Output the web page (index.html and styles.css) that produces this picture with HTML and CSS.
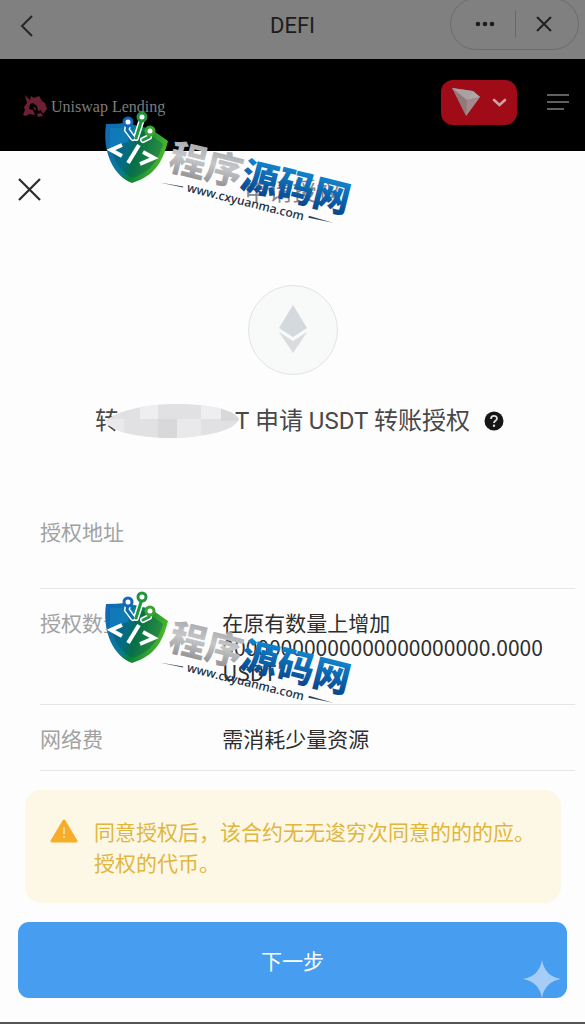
FILE: index.html
```
<!DOCTYPE html>
<html lang="zh-CN">
<head>
    <meta charset="UTF-8">
    <meta name="viewport" content="width=device-width, initial-scale=1.0">
    <title>DEFI</title>
    <link rel="stylesheet" href="styles.css">
</head>
<body>
    <div class="topbar">
        <button class="icon-btn back" aria-label="返回">
            <svg width="14" height="24" viewBox="0 0 14 24"><path d="M12 2 2 12l10 10" fill="none" stroke="#262626" stroke-width="2"/></svg>
        </button>
        <h1>DEFI</h1>
        <div class="capsule">
            <button class="icon-btn" aria-label="更多">
                <svg width="20" height="6" viewBox="0 0 20 6" fill="#1c1c1c"><circle cx="3" cy="3" r="2.3"/><circle cx="10" cy="3" r="2.3"/><circle cx="17" cy="3" r="2.3"/></svg>
            </button>
            <span class="split"></span>
            <button class="icon-btn" aria-label="关闭">
                <svg width="16" height="16" viewBox="0 0 16 16"><path d="M1 1l14 14M15 1L1 15" fill="none" stroke="#222" stroke-width="2"/></svg>
            </button>
        </div>
    </div>

    <div class="site-header">
        <a href="#" class="brand">
            <svg width="26" height="26" viewBox="0 0 26 26" fill="#6d2034">
                <path d="M3 2l5 5 1-4 3 2 5-2 3 5 3 2 2 6-4 5-2-4-3 1-1-5-4-3-3 1-1 5 4 1 2 5-6-1-3 2-3-1 2-5-1-3 3-4z"/>
                <path d="M15 21l4-1 2 3-5 1zM11 14l3 1-1 3z"/>
            </svg>
            <span>Uniswap Lending</span>
        </a>
        <button class="chain" aria-label="切换网络">
            <svg width="30" height="30" viewBox="0 0 30 30">
                <path d="M1 1l21 3 7 6-14 19z" fill="#92797c"/>
                <path d="M1 1l21 3-6 9z" fill="#aaa1a2"/>
                <path d="M22 4l7 6-13 3z" fill="#b3a8a9"/>
                <path d="M16 13l13-3-14 19z" fill="#a38b8d"/>
            </svg>
            <svg width="15" height="9" viewBox="0 0 15 9"><path d="M2 2l5.500 5L13 2" fill="none" stroke="#c9a3a6" stroke-width="2.600" stroke-linecap="round"/></svg>
        </button>
        <button class="icon-btn" aria-label="菜单">
            <svg width="22" height="18" viewBox="0 0 22 18"><path d="M0 2h22M0 9h22M0 16h17" stroke="#606060" stroke-width="2"/></svg>
        </button>
    </div>

    <main class="sheet">
        <div class="sheet-head">
            <button class="icon-btn" aria-label="关闭">
                <svg width="23" height="23" viewBox="0 0 23 23"><path d="M1 1l21 21M22 1L1 22" fill="none" stroke="#2b2b2b" stroke-width="2.200"/></svg>
            </button>
            <h2>申请授权</h2>
        </div>

        <div class="coin">
            <svg width="30" height="50" viewBox="0 0 30 50">
                <path d="M15 0l14 23-14 9L1 23z" fill="#d3d9dc"/>
                <path d="M1 27l14 9 14-9-14 21z" fill="#d9dbdc"/>
            </svg>
        </div>

        <p class="request">
            <span>转</span>
            <svg class="mask" width="134" height="36" viewBox="0 0 134 36">
                <defs><clipPath id="blob"><path d="M0 18C12 8 38 2 66 1c30-1 62 4 68 15-4 12-34 18-66 19C36 35 8 30 0 18z"/></clipPath></defs>
                <g clip-path="url(#blob)">
                    <path fill="#e1e1e3" d="M0 0h134v36H0z"/>
                    <path fill="#eeeef0" d="M35 0h18v16H35zM96 0h20v16H96z"/>
                    <path fill="#d8d8da" d="M53 16h19v20H53zM116 0h18v18h-18z"/>
                    <path fill="#e9e9eb" d="M0 16h19v20H0zM72 16h24v20H72z"/>
                </g>
            </svg>
            <span class="request-text">T 申请 USDT 转账授权</span>
            <svg class="help" width="20" height="20" viewBox="0 0 20 20">
                <circle cx="10" cy="10" r="9.500" fill="#161616"/>
                <path d="M7 8c0-4 6-4 6-.5 0 2.300-3 2.300-3 4.500" fill="none" stroke="#ddd" stroke-width="1.800"/>
                <circle cx="10" cy="14.800" r="1.200" fill="#ddd"/>
            </svg>
        </p>

        <dl class="details">
            <div class="row row-address">
                <dt>授权地址</dt>
                <dd></dd>
            </div>
            <div class="row">
                <dt>授权数量</dt>
                <dd>在原有数量上增加<br>00000000000000000000000.0000<br>USDT</dd>
            </div>
            <div class="row">
                <dt>网络费</dt>
                <dd>需消耗少量资源</dd>
            </div>
        </dl>

        <div class="warning">
            <svg width="28" height="24" viewBox="0 0 28 24">
                <path d="M14 2l12 20H2z" fill="#f6ad2b" stroke="#f6ad2b" stroke-width="3" stroke-linejoin="round"/>
                <path d="M14 8v7M14 17v2" stroke="#fbd48b" stroke-width="2"/>
            </svg>
            <p>同意授权后，该合约无无逡穷次同意的的的应。<br>授权的代币。</p>
        </div>

        <button class="next">
            下一步
            <svg class="spark" width="38" height="38" viewBox="0 0 38 38"><path d="M19 0c2 11 8 17 19 19-11 2-17 8-19 19-2-11-8-17-19-19C11 17 17 11 19 0z" fill="#a6cdf7"/></svg>
        </button>

        <!-- 水印 -->
        <svg class="watermark watermark-top" width="260" height="130" viewBox="0 0 260 130">
            <defs>
                <linearGradient id="shield" x1="0" y1="0" x2="1" y2="0.300">
                    <stop offset="0" stop-color="#1467bd"/>
                    <stop offset="0.450" stop-color="#087b91"/>
                    <stop offset="0.600" stop-color="#078238"/>
                    <stop offset="1" stop-color="#49b629"/>
                </linearGradient>
                <linearGradient id="silver" x1="0" y1="0" x2="0" y2="1">
                    <stop offset="0" stop-color="#98999c"/>
                    <stop offset="0.500" stop-color="#c6c7c9"/>
                    <stop offset="1" stop-color="#808184"/>
                </linearGradient>
                <linearGradient id="blue" x1="0" y1="0" x2="0" y2="1">
                    <stop offset="0.200" stop-color="#1286cf"/>
                    <stop offset="1" stop-color="#06397f"/>
                </linearGradient>
                <symbol id="mark" viewBox="0 0 260 130">
                    <path d="M7 21q10 0 20-1l25 6 17 12c-5 20-13 35-36 42C15 73 3 50 7 21z" fill="url(#shield)"/>
                    <path d="M11 25q9 0 17-1l21 6 15 11c-5 17-13 28-30 34C18 68 9 49 11 25z" fill="#024c63" fill-opacity="0.350"/>
                    <path d="M11 25q9 0 17-1l9 3-9 12-17 7z" fill="#1689d1" fill-opacity="0.600"/>
                    <g fill="none" stroke-linecap="round">
                        <path d="M29 21l-1 6 6 8M43 16l-6 19M51 29l-1 5-6 3" stroke="#fff" stroke-width="6"/>
                        <path d="M29 21l-1 6 6 8" stroke="#0b69ae" stroke-width="3"/>
                        <path d="M43 16l-6 19M51 29l-1 5-6 3" stroke="#219641" stroke-width="3"/>
                        <g fill="#fff" stroke-width="3">
                            <circle cx="29" cy="19" r="4" stroke="#1467bd"/>
                            <circle cx="43" cy="14" r="4" stroke="#23943e"/>
                            <circle cx="51" cy="28" r="4" stroke="#3ba335"/>
                        </g>
                    </g>
                    <path d="M23 42l-11 5 11 6M40 42L29 60M44 49l11 6-14 6" fill="none" stroke="#fff" stroke-width="4"/>
                    <g transform="translate(68 66) rotate(14)">
                        <text class="wm-name"><tspan fill="url(#silver)">程序</tspan><tspan fill="url(#blue)">源码网</tspan></text>
                        <text class="wm-url" x="24" y="17">www.cxyuanma.com</text>
                        <path d="M-4 15l24-2v1zM149 11l25 1-25 1z" fill="#334155"/>
                    </g>
                </symbol>
            </defs>
            <use href="#mark"/>
        </svg>
        <svg class="watermark watermark-bottom" width="260" height="130" viewBox="0 0 260 130">
            <use href="#mark"/>
        </svg>
    </main>
</body>
</html>
```
FILE: styles.css
```
* {
    box-sizing: border-box;
}
body {
    margin: 0;
    min-height: 100vh;
    display: flex;
    flex-direction: column;
    background-color: #000;
    font-family: "Noto Sans CJK SC", sans-serif;
    font-size: 21px;
    line-height: 25px;
}
h1, h2, p, dl, dd {
    margin: 0;
    font-weight: 400;
}
button {
    font: inherit;
    border: none;
    cursor: pointer;
}
svg {
    display: block;
    flex-shrink: 0;
}
.icon-btn {
    padding: 0;
    background: none;
}

.topbar {
    display: grid;
    grid-template-columns: 1fr auto 1fr;
    align-items: center;
    height: 59px;
    padding: 0 6px 8px;
    background-color: #808080;
    overflow: hidden;
}
.topbar h1 {
    font-family: Roboto, sans-serif;
    font-size: 22px;
    color: #1c1c1c;
}
.back {
    justify-self: start;
    margin-left: 14px;
}
.capsule {
    justify-self: end;
    display: flex;
    align-items: center;
    gap: 20px;
    height: 52px;
    margin-top: -4px;
    padding: 0 26px 0 24px;
    border: 1px solid #6c6c6c;
    border-radius: 26px;
}
.split {
    width: 1px;
    height: 26px;
    background-color: #686868;
}

.site-header {
    display: flex;
    align-items: center;
    height: 92px;
    padding: 0 16px 6px 22px;
    background-color: #000;
}
.brand {
    display: flex;
    align-items: center;
    gap: 3px;
    margin-right: auto;
    padding-top: 8px;
    font-family: "Liberation Serif", serif;
    font-size: 16px;
    color: #7c7c7c;
    text-decoration: none;
}
.chain {
    display: flex;
    align-items: center;
    gap: 11px;
    height: 45px;
    margin-right: 30px;
    padding: 0 10px;
    border-radius: 12px;
    background-color: #9f0b17;
}

.sheet {
    position: relative;
    flex: 1;
    background-color: #fdfdfd;
    border-bottom: 2px solid #555;
}
.sheet-head {
    display: grid;
    grid-template-columns: 1fr auto 1fr;
    align-items: center;
    padding: 26px 18px 0;
}
.sheet-head .icon-btn {
    justify-self: start;
}
.sheet-head h2 {
    font-size: 24px;
    color: #888;
}
.coin {
    display: flex;
    align-items: center;
    justify-content: center;
    width: 90px;
    height: 90px;
    margin: 83px auto 0;
    border: 1px solid #e2e3e4;
    border-radius: 50%;
    background-color: #f8f9f9;
}
.request {
    display: flex;
    align-items: center;
    justify-content: center;
    margin-top: 28px;
    padding-left: 14px;
    font-family: Roboto, "Noto Sans CJK SC", sans-serif;
    font-size: 24px;
    line-height: 36px;
    color: #484848;
    white-space: nowrap;
}
.mask {
    margin: 0 -4px 0 -14px;
}
.help {
    margin-left: 14px;
}

.details {
    margin: 59px 10px 0 40px;
}
.row {
    display: grid;
    grid-template-columns: 1fr 2fr;
    padding: 21px 0 19px;
    border-bottom: 1px solid #e6e6e6;
}
.row-address {
    padding-bottom: 44px;
}
.row dt {
    color: #a2a2a2;
}
.row dd {
    padding-left: 4px;
    color: #2e2e2e;
}

.warning {
    display: flex;
    gap: 16px;
    margin: 19px 24px 0 25px;
    padding: 26px 20px 25px 25px;
    border-radius: 16px;
    background-color: #fdf8e6;
    color: #e0b63e;
    line-height: 31px;
}
.warning svg {
    margin-top: 3px;
}

.next {
    position: relative;
    display: block;
    width: calc(100% - 36px);
    height: 76px;
    margin: 19px 18px 23px;
    border-radius: 11px;
    background-color: #479df0;
    color: #fff;
}
.spark {
    position: absolute;
    right: 6px;
    bottom: 0;
}

.watermark {
    position: absolute;
    left: 99px;
    pointer-events: none;
}
.watermark-top {
    top: -48px;
}
.watermark-bottom {
    top: 432px;
}
.wm-name {
    font-family: "Noto Sans CJK SC", sans-serif;
    font-size: 37px;
    font-weight: 900;
}
.wm-url {
    font-family: "Open Sans", sans-serif;
    font-size: 12px;
    font-weight: 600;
    fill: #26354a;
}
```
